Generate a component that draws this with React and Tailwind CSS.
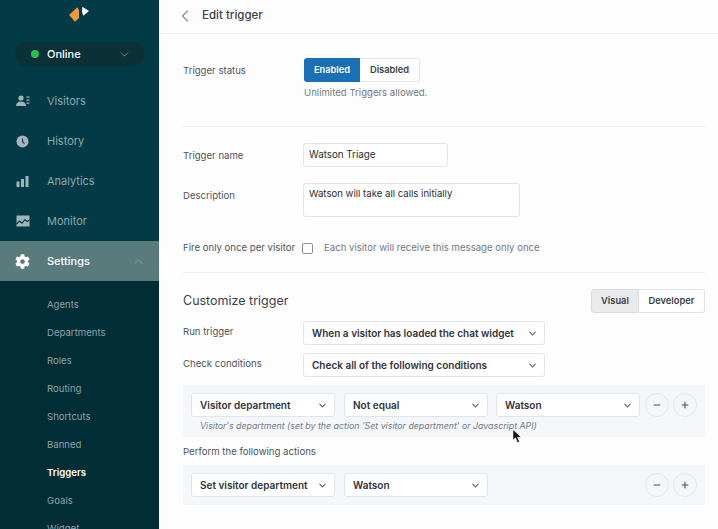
import React from "react";
import { ChevronDown, ChevronUp, ChevronLeft, Minus, Plus } from "lucide-react";
import { FaCog } from "react-icons/fa";

const VisitorsIcon = () => (
  <svg width="14" height="12" viewBox="0 0 14 12" fill="currentColor">
    <circle cx="5" cy="3" r="2.6" />
    <path d="M0 11c0-3 2-4.6 5-4.6s5 1.6 5 4.6z" />
    <rect x="10.5" y="1.5" width="3" height="1.2" />
    <rect x="10.5" y="4.5" width="3" height="1.2" />
    <rect x="10.5" y="7.5" width="3" height="1.2" />
  </svg>
);
const HistoryIcon = () => (
  <svg width="13" height="13" viewBox="0 0 13 13">
    <circle cx="6.5" cy="6.5" r="6" fill="currentColor" />
    <path d="M6.5 3.5v3l2 2.2" stroke="#023a45" strokeWidth="1.1" fill="none" />
  </svg>
);
const AnalyticsIcon = () => (
  <svg width="13" height="11" viewBox="0 0 13 11" fill="currentColor">
    <rect x="0.5" y="5.5" width="3" height="5.5" />
    <rect x="5" y="3" width="3" height="8" />
    <rect x="9.5" y="0" width="3" height="11" />
  </svg>
);
const MonitorIcon = () => (
  <svg width="14" height="12" viewBox="0 0 14 12">
    <rect x="0.5" y="0.5" width="13" height="11" fill="currentColor" />
    <path d="M0.5 9l3-3 2.5 2.2L9 4.5l2 2 2.5-1.5" stroke="#023a45" strokeWidth="1.1" fill="none" />
  </svg>
);

const NavItem = ({ icon, label }) => (
  <div className="h-10 shrink-0 flex items-center text-[#8aa9ad]">
    <div className="w-[47px] pl-4 flex items-center text-[#a3b5ba]">{icon}</div>
    <span className="text-[11px]">{label}</span>
  </div>
);

const Select = ({ label, className }) => (
  <div className={`h-6 bg-white border border-[#e2e5e8] rounded-[3px] flex items-center justify-between pl-2 pr-[6px] ${className}`}>
    <span className="text-[10px] font-semibold text-[#2f3338] whitespace-nowrap">{label}</span>
    <ChevronDown size={11} strokeWidth={2.25} className="text-[#555b60] shrink-0" />
  </div>
);

const Round = ({ children }) => (
  <div className="w-6 h-6 rounded-full border border-[#e4e7ea] flex items-center justify-center text-[#4a4f54]">{children}</div>
);

const Controls = () => (
  <div className="ml-auto flex gap-1">
    <Round><Minus size={10} strokeWidth={2.5} /></Round>
    <Round><Plus size={10} strokeWidth={2.5} /></Round>
  </div>
);

const Label = ({ children, className = "" }) => (
  <div className={`text-[9.6px] text-[#4f5459] whitespace-nowrap ${className}`}>{children}</div>
);

export default function App() {
  return (
    <div className="relative w-[718px] h-[529px] overflow-hidden flex bg-white" style={{ fontFamily: "Inter, 'Liberation Sans', sans-serif" }}>
      <aside className="w-[159px] h-[529px] overflow-hidden shrink-0 bg-[#023a45] flex flex-col">
        <div className="h-[42px] shrink-0 pt-[5px] pl-[68px]">
          <svg width="22" height="19" viewBox="0 0 22 19">
            <path d="M9.300 2.300L1 10l6 6.700L11 13V5z" fill="#ef9a3c" />
            <path d="M14.300 1.700L21 6l-5.700 4.700L14 7z" fill="#ffffff" />
          </svg>
        </div>
        <div className="mx-[15px] h-6 shrink-0 rounded-full bg-[#0c3038] flex items-center pl-4 pr-[13px]">
          <span className="w-2 h-2 rounded-full bg-[#27c24c] mr-2" />
          <span className="text-[11px] font-medium text-white">Online</span>
          <ChevronDown size={13} strokeWidth={1.5} className="ml-auto text-[#7e9a9d]" />
        </div>
        <div className="h-[15px] shrink-0" />
        <NavItem icon={<VisitorsIcon />} label="Visitors" />
        <NavItem icon={<HistoryIcon />} label="History" />
        <NavItem icon={<AnalyticsIcon />} label="Analytics" />
        <NavItem icon={<MonitorIcon />} label="Monitor" />
        <div className="h-10 shrink-0 flex items-center bg-[#5a7b7c] text-white">
          <div className="w-[47px] pl-[15px] flex items-center"><FaCog size={15} /></div>
          <span className="text-[11px] font-medium">Settings</span>
          <ChevronUp size={13} strokeWidth={1.5} className="ml-auto mr-[14px] text-[#8fa7a8]" />
        </div>
        <div className="flex-1 bg-[#012d36] pt-[10px] pl-[47px] text-[9.6px] text-[#86a5a8]">
          {["Agents", "Departments", "Roles", "Routing", "Shortcuts", "Banned"].map((t) => (
            <div key={t} className="h-7 flex items-center">{t}</div>
          ))}
          <div className="h-7 flex items-center font-semibold text-white">Triggers</div>
          <div className="h-7 flex items-center">Goals</div>
          <div className="h-7 flex items-center">Widget</div>
        </div>
      </aside>

      <main className="flex-1 min-w-0 bg-[#fdfdfe]">
        <header className="h-[34px] border-b border-[#eef0f1] flex items-center pl-4 pb-[2px]">
          <ChevronLeft size={20} strokeWidth={1.5} className="text-[#8d9296] mr-[7px]" />
          <span className="text-[11.5px] font-medium text-[#3d4246]">Edit trigger</span>
        </header>

        <div className="pl-6 pr-[13px]">
          <section className="pt-6 h-[93px] border-b border-[#eceeef]">
            <div className="flex items-center">
              <Label className="w-[121px] pt-[2px]">Trigger status</Label>
              <div className="flex h-6 text-[9.3px] font-semibold">
                <div className="w-[56px] bg-[#1b6fb5] text-white rounded-l-[3px] flex items-center justify-center">Enabled</div>
                <div className="w-[60px] bg-white border border-l-0 border-[#e2e5e8] text-[#3a3f44] rounded-r-[3px] flex items-center justify-center">Disabled</div>
              </div>
            </div>
            <div className="pl-[121px] mt-1 text-[9.6px] text-[#74797e]">Unlimited Triggers allowed.</div>
          </section>

          <section className="h-[146px] border-b border-[#eceeef] pt-4">
            <div className="flex items-center">
              <Label className="w-[120px] pt-[2px]">Trigger name</Label>
              <div className="w-[145px] h-6 bg-white border border-[#e2e5e8] rounded-[3px] flex items-center pl-[5px] text-[9.8px] text-[#2a2e32]">Watson Triage</div>
            </div>
            <div className="flex mt-4">
              <Label className="w-[120px] pt-[6px]">Description</Label>
              <div className="w-[217px] h-[34px] bg-white border border-[#e2e5e8] rounded-[3px] pl-[5px] pt-[3px] text-[9.6px] text-[#2a2e32]">Watson will take all calls initially</div>
            </div>
            <div className="flex items-center mt-6">
              <Label className="w-[119px]">Fire only once per visitor</Label>
              <div className="w-[11px] h-[11px] bg-white border border-[#8b8f93] rounded-[2px]" />
              <span className="ml-[11px] text-[9.6px] text-[#74797e]">Each visitor will receive this message only once</span>
            </div>
          </section>

          <section className="pt-4">
            <div className="flex items-center justify-between">
              <div className="text-[12.5px] text-[#3d4246]">Customize trigger</div>
              <div className="flex h-6 text-[9.3px] font-semibold text-[#3a3f44]">
                <div className="w-[48px] bg-[#e9eaec] border border-[#d9dcdf] rounded-l-[3px] flex items-center justify-center">Visual</div>
                <div className="w-[66px] bg-white border border-l-0 border-[#e2e5e8] rounded-r-[3px] flex items-center justify-center">Developer</div>
              </div>
            </div>
            <div className="flex items-center mt-2">
              <Label className="w-[120px] -mt-[2px]">Run trigger</Label>
              <Select label="When a visitor has loaded the chat widget" className="w-[242px]" />
            </div>
            <div className="flex items-center mt-2">
              <Label className="w-[120px] -mt-[2px]">Check conditions</Label>
              <Select label="Check all of the following conditions" className="w-[242px]" />
            </div>

            <div className="mt-2 h-[52px] bg-[#f4f7f9] px-2 pt-2">
              <div className="flex items-center">
                <Select label="Visitor department" className="w-[144px]" />
                <Select label="Not equal" className="w-[144px] ml-[9px]" />
                <Select label="Watson" className="w-[144px] ml-2" />
                <Controls />
              </div>
              <div className="mt-[2px] pl-[9px] text-[8.8px] italic text-[#74797e] whitespace-nowrap">Visitor's department (set by the action 'Set visitor department' or Javascript API)</div>
            </div>

            <Label className="mt-1 mb-1 h-5 pt-[2px] flex items-center">Perform the following actions</Label>

            <div className="h-10 bg-[#f4f7f9] px-2 flex items-center">
              <Select label="Set visitor department" className="w-[144px]" />
              <Select label="Watson" className="w-[144px] ml-[9px]" />
              <Controls />
            </div>
          </section>
        </div>
      </main>

      <svg className="absolute left-[512px] top-[429px]" width="10" height="15" viewBox="0 0 10 15">
        <path d="M1 0.500V11l2.500-2.200L5.500 13.500l2-.8L5.500 8.200H9z" fill="#111" stroke="#fff" strokeWidth="0.5" />
      </svg>
    </div>
  );
}
